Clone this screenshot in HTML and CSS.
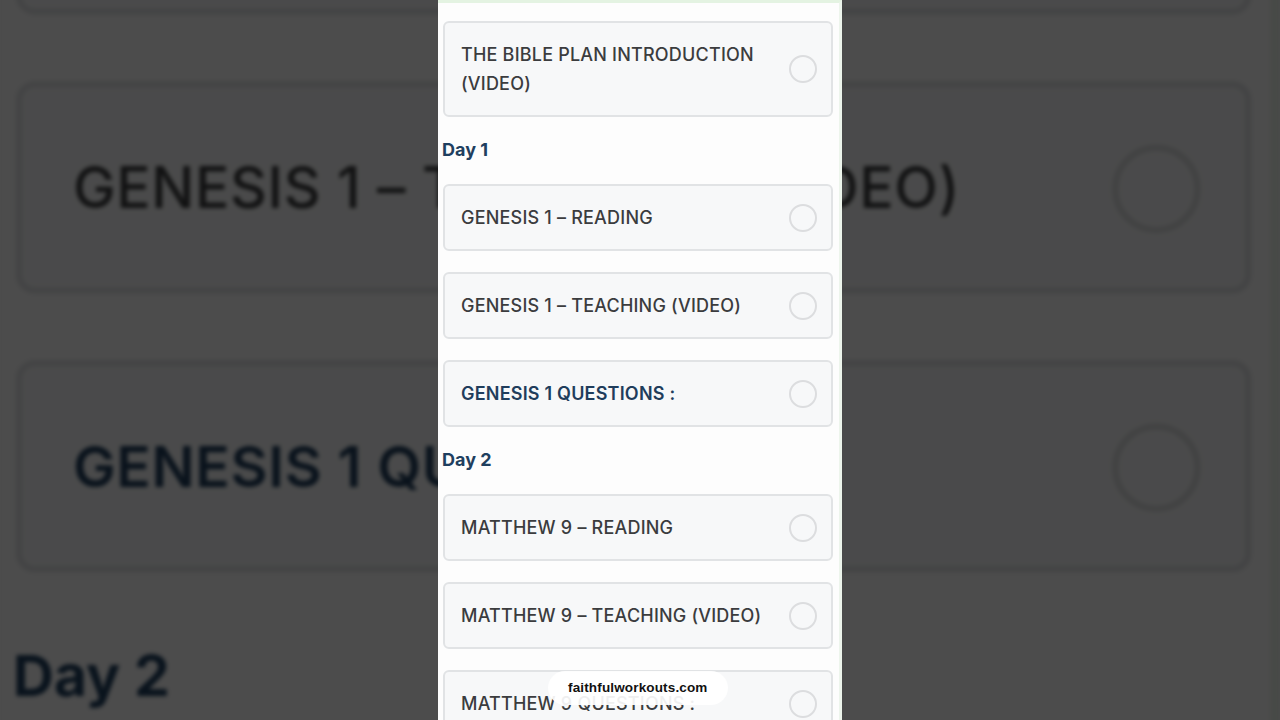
FILE: index.html
```html
<!DOCTYPE html>
<html lang="en">
<head>
<meta charset="utf-8">
<title>The Bible Plan</title>
<link rel="stylesheet" href="styles.css">
</head>
<body>
<div class="backdrop" aria-hidden="true">
  <div class="frame frame-big">
    <div class="list">
      <div class="card"><span class="title">The Bible Plan Introduction (Video)</span><span class="check"></span></div>
      <div class="day">Day 1</div>
      <div class="card"><span class="title">Genesis 1 – Reading</span><span class="check"></span></div>
      <div class="card"><span class="title">Genesis 1 – Teaching (Video)</span><span class="check"></span></div>
      <div class="card"><span class="title title-q">Genesis 1 Questions :</span><span class="check"></span></div>
      <div class="day">Day 2</div>
      <div class="card"><span class="title">Matthew 9 – Reading</span><span class="check"></span></div>
      <div class="card"><span class="title">Matthew 9 – Teaching (Video)</span><span class="check"></span></div>
      <div class="card"><span class="title">Matthew 9 Questions :</span><span class="check"></span></div>
    </div>
  </div>
</div>
<main class="stage">
  <div class="frame">
    <div class="list">
      <div class="card"><span class="title">The Bible Plan Introduction (Video)</span><span class="check"></span></div>
      <div class="day">Day 1</div>
      <div class="card"><span class="title">Genesis 1 – Reading</span><span class="check"></span></div>
      <div class="card"><span class="title">Genesis 1 – Teaching (Video)</span><span class="check"></span></div>
      <div class="card"><span class="title title-q">Genesis 1 Questions :</span><span class="check"></span></div>
      <div class="day">Day 2</div>
      <div class="card"><span class="title">Matthew 9 – Reading</span><span class="check"></span></div>
      <div class="card"><span class="title">Matthew 9 – Teaching (Video)</span><span class="check"></span></div>
      <div class="card"><span class="title">Matthew 9 Questions :</span><span class="check"></span></div>
    </div>
    <div class="pill">faithfulworkouts.com</div>
  </div>
</main>
</body>
</html>
```
FILE: styles.css
```css
html, body {
  margin: 0;
  padding: 0;
  width: 1280px;
  height: 720px;
  overflow: hidden;
  background: #4c4c4c;
  font-family: "Inter", "DejaVu Sans", sans-serif;
}

.backdrop {
  position: fixed;
  inset: 0;
  display: flex;
  justify-content: center;
  align-items: center;
  overflow: hidden;
  z-index: 0;
}

.frame-big {
  flex: none;
  transform: scale(3.168);
  transform-origin: 50% 50%;
  filter: blur(0.7px) brightness(0.3);
}

.stage {
  position: relative;
  z-index: 1;
  display: flex;
  justify-content: center;
  height: 720px;
}

.frame {
  position: relative;
  box-sizing: border-box;
  width: 404px;
  height: 720px;
  overflow: hidden;
  background: #fdfdfd;
  border-top: 3px solid #e4f3e2;
  border-right: 3px solid #edf5ec;
}

.list {
  display: flex;
  flex-direction: column;
  padding: 18px 6px 0 5px;
  gap: 21px;
}

.card {
  display: flex;
  align-items: center;
  justify-content: space-between;
  gap: 16px;
  padding: 17px 14px 17px 16px;
  border: 2px solid #e1e3e5;
  border-radius: 6px;
  background: #f7f8f9;
}

.title {
  font-size: 18px;
  font-weight: 500;
  line-height: 29px;
  letter-spacing: 0.2px;
  text-transform: uppercase;
  color: #3b3c3e;
}

.title-q {
  color: #1f3d5c;
  font-weight: 600;
}

.check {
  flex: none;
  box-sizing: border-box;
  width: 28px;
  height: 28px;
  border: 2px solid #dcdddf;
  border-radius: 50%;
  background: #f7f8f9;
}

.day {
  margin: 0 0 1px -1px;
  font-size: 18px;
  font-weight: 700;
  line-height: 24px;
  color: #1f3f5f;
}

.pill {
  position: absolute;
  left: 110px;
  top: 668px;
  padding: 0 20px;
  height: 34px;
  line-height: 34px;
  border-radius: 17px;
  background: rgba(255, 255, 255, 0.92);
  font-family: "Liberation Sans", "Inter", sans-serif;
  font-size: 13.5px;
  font-weight: 700;
  color: #111;
  letter-spacing: 0.15px;
}
```
